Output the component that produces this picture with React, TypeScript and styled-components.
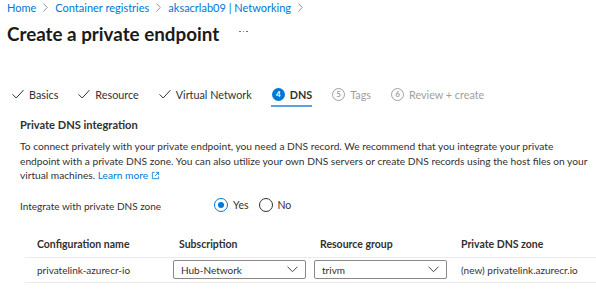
import React from "react";
import styled, { createGlobalStyle } from "styled-components";

const GlobalStyle = createGlobalStyle`
  html, body {
    margin: 0;
    padding: 0;
    background: #ffffff;
  }
  body {
    font-family: "Segoe UI", Lato, "Noto Sans", sans-serif;
    color: #323130;
  }
`;

const Page = styled.div`
  width: 596px;
  height: 303px;
  overflow: hidden;
  padding: 0 0 0 7px;
  box-sizing: border-box;
`;

const Breadcrumb = styled.nav`
  display: flex;
  align-items: center;
  gap: 7px;
  height: 15px;
  font-size: 11px;
  line-height: 15px;
`;

const Crumb = styled.span`
  color: #0078d4;
  white-space: nowrap;
`;

const CrumbSep = styled.span`
  display: flex;
  align-items: center;
`;

const TitleRow = styled.div`
  display: flex;
  align-items: center;
  gap: 20px;
  margin-top: 5px;
  height: 26px;
`;

const Title = styled.h1`
  margin: 0;
  font-size: 18.8px;
  font-weight: 700;
  color: #1b1a19;
`;

const More = styled.span`
  display: flex;
  gap: 2px;
  margin-top: -3px;
`;

const Dot = styled.span`
  width: 1.5px;
  height: 1.5px;
  border-radius: 50%;
  background: #605e5c;
`;

const Tabs = styled.div`
  display: flex;
  align-items: center;
  gap: 20px;
  margin-top: 37px;
  padding-left: 5px;
  height: 22px;
`;

const Tab = styled.div<{ $active?: boolean; $disabled?: boolean }>`
  position: relative;
  display: flex;
  align-items: center;
  gap: 5px;
  height: 22px;
  font-size: 10.8px;
  font-weight: ${(p) => (p.$active ? 700 : 400)};
  color: ${(p) => (p.$disabled ? "#a19f9d" : "#323130")};
  white-space: nowrap;

  ${(p) =>
    p.$active &&
    `
    &::after {
      content: "";
      position: absolute;
      left: -1px;
      right: 0;
      bottom: -2px;
      height: 2px;
      background: #5ca0e0;
    }
  `}
`;

const StepBadge = styled.span<{ $active?: boolean }>`
  display: inline-flex;
  align-items: center;
  justify-content: center;
  width: 13px;
  height: 13px;
  border-radius: 50%;
  box-sizing: border-box;
  font-size: 8px;
  font-weight: 700;
  line-height: 1;
  background: ${(p) => (p.$active ? "#0078d4" : "transparent")};
  color: ${(p) => (p.$active ? "#ffffff" : "#a19f9d")};
  border: ${(p) => (p.$active ? "none" : "1px solid #a19f9d")};
`;

const Section = styled.section`
  padding-left: 13px;
  margin-top: 12px;
`;

const SectionTitle = styled.h2`
  margin: 0;
  font-size: 11.1px;
  font-weight: 700;
  color: #323130;
  line-height: 16px;
`;

const Paragraph = styled.p`
  margin: 6px 0 0;
  font-size: 10.2px;
  line-height: 14.5px;
  color: #323130;
  width: 576px;
  white-space: nowrap;
`;

const Link = styled.a`
  color: #0078d4;
  text-decoration: none;
`;

const ExtWrap = styled.span`
  display: inline-block;
  vertical-align: -1px;
  margin-left: 3px;
`;

const FieldRow = styled.div`
  display: flex;
  align-items: center;
  margin-top: 13px;
  height: 16px;
  font-size: 10px;
`;

const FieldLabel = styled.span`
  width: 194px;
  margin-top: 3px;
`;

const RadioGroup = styled.div`
  display: flex;
  align-items: center;
  gap: 10px;
`;

const RadioOption = styled.label`
  display: flex;
  align-items: center;
  gap: 5px;
  font-size: 10.5px;
`;

const RadioCircle = styled.span<{ $checked?: boolean }>`
  width: 14px;
  height: 14px;
  border-radius: 50%;
  box-sizing: border-box;
  border: 1px solid ${(p) => (p.$checked ? "#0078d4" : "#323130")};
  display: flex;
  align-items: center;
  justify-content: center;

  &::after {
    content: "";
    width: 6px;
    height: 6px;
    border-radius: 50%;
    background: ${(p) => (p.$checked ? "#0078d4" : "transparent")};
  }
`;

const Table = styled.div`
  margin-top: 19px;
  margin-left: 5px;
`;

const TableRow = styled.div<{ $header?: boolean }>`
  display: grid;
  grid-template-columns: 142px 141px 141px 1fr;
  align-items: center;
  height: ${(p) => (p.$header ? "25px" : "24px")};
  padding-left: 6px;
  border-bottom: 1px solid #edebe9;
  font-size: ${(p) => (p.$header ? "10.5px" : "10px")};
  font-weight: ${(p) => (p.$header ? 700 : 400)};
  color: #323130;
  white-space: nowrap;
`;

const Cell = styled.div<{ $flush?: boolean }>`
  padding-left: ${(p) => (p.$flush ? 0 : 6)}px;
`;

const Select = styled.div`
  display: flex;
  align-items: center;
  justify-content: space-between;
  box-sizing: border-box;
  width: 133px;
  height: 19px;
  border: 1px solid #8a8886;
  border-radius: 2px;
  padding: 0 7px 0 7px;
  background: #ffffff;
`;

const Check = () => (
  <svg width="12" height="12" viewBox="0 0 12 12" fill="none">
    <path d="M0.8 6.6l3.4 3.4L11.2 2.4" stroke="#323130" strokeWidth="1" strokeLinecap="round" strokeLinejoin="round" />
  </svg>
);

const Chevron = () => (
  <svg width="11" height="7" viewBox="0 0 11 7" fill="none">
    <path d="M0.8 1l4.7 4.7L10.2 1" stroke="#323130" strokeWidth="0.9" strokeLinecap="round" strokeLinejoin="round" />
  </svg>
);

const RightChevron = () => (
  <svg width="5" height="9" viewBox="0 0 5 9" fill="none">
    <path d="M0.8 0.8l3.4 3.7-3.4 3.7" stroke="#8a8886" strokeWidth="0.9" strokeLinecap="round" strokeLinejoin="round" />
  </svg>
);

const ExternalIcon = () => (
  <svg width="9" height="9" viewBox="0 0 10 10" fill="none">
    <path d="M4 1.5H1.5v7h7V6" stroke="#0078d4" strokeWidth="0.9" />
    <path d="M5.5 1.5h3v3M8.5 1.5L4.5 5.5" stroke="#0078d4" strokeWidth="0.9" />
  </svg>
);

const crumbs = ["Home", "Container registries", "aksacrlab09 | Networking"];

const steps = [
  { label: "Basics", done: true },
  { label: "Resource", done: true },
  { label: "Virtual Network", done: true },
  { label: "DNS", num: 4, active: true },
  { label: "Tags", num: 5, disabled: true },
  { label: "Review + create", num: 6, disabled: true },
];

export default function App() {
  return (
    <>
      <GlobalStyle />
      <Page>
        <Breadcrumb>
          {crumbs.map((c) => (
            <React.Fragment key={c}>
              <Crumb>{c}</Crumb>
              <CrumbSep>
                <RightChevron />
              </CrumbSep>
            </React.Fragment>
          ))}
        </Breadcrumb>

        <TitleRow>
          <Title>Create a private endpoint</Title>
          <More>
            <Dot />
            <Dot />
            <Dot />
          </More>
        </TitleRow>

        <Tabs>
          {steps.map((s) => (
            <Tab key={s.label} $active={s.active} $disabled={s.disabled}>
              {s.done ? <Check /> : <StepBadge $active={s.active}>{s.num}</StepBadge>}
              {s.label}
            </Tab>
          ))}
        </Tabs>

        <Section>
          <SectionTitle>Private DNS integration</SectionTitle>
          <Paragraph>
            To connect privately with your private endpoint, you need a DNS record. We recommend that you integrate
            your private
            <br />
            endpoint with a private DNS zone. You can also utilize your own DNS servers or create DNS records using the
            host files on your
            <br />
            virtual machines.{" "}
            <Link href="#">
              Learn more
              <ExtWrap>
                <ExternalIcon />
              </ExtWrap>
            </Link>
          </Paragraph>

          <FieldRow>
            <FieldLabel>Integrate with private DNS zone</FieldLabel>
            <RadioGroup>
              <RadioOption>
                <RadioCircle $checked />
                Yes
              </RadioOption>
              <RadioOption>
                <RadioCircle />
                No
              </RadioOption>
            </RadioGroup>
          </FieldRow>

          <Table>
            <TableRow $header>
              <Cell>Configuration name</Cell>
              <Cell>Subscription</Cell>
              <Cell>Resource group</Cell>
              <Cell>Private DNS zone</Cell>
            </TableRow>
            <TableRow>
              <Cell>privatelink-azurecr-io</Cell>
              <Cell $flush>
                <Select>
                  Hub-Network
                  <Chevron />
                </Select>
              </Cell>
              <Cell $flush>
                <Select>
                  trivm
                  <Chevron />
                </Select>
              </Cell>
              <Cell>(new) privatelink.azurecr.io</Cell>
            </TableRow>
          </Table>
        </Section>
      </Page>
    </>
  );
}
